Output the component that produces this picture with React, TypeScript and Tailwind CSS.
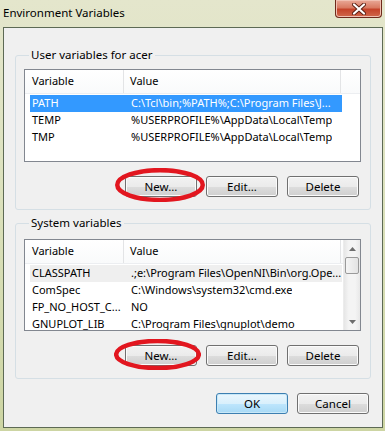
import React from 'react';

const font = { fontFamily: '"Segoe UI", "Noto Sans", "Open Sans", sans-serif' };

type Row = { name: string; value: string; state?: 'active' | 'faint' };

const userVars: Row[] = [
  { name: 'PATH', value: 'C:\\Tcl\\bin;%PATH%;C:\\Program Files\\J...', state: 'active' },
  { name: 'TEMP', value: '%USERPROFILE%\\AppData\\Local\\Temp' },
  { name: 'TMP', value: '%USERPROFILE%\\AppData\\Local\\Temp' },
];

const systemVars: Row[] = [
  { name: 'CLASSPATH', value: '.;e:\\Program Files\\OpenNI\\Bin\\org.Ope...', state: 'faint' },
  { name: 'ComSpec', value: 'C:\\Windows\\system32\\cmd.exe' },
  { name: 'FP_NO_HOST_C...', value: 'NO' },
  { name: 'GNUPLOT_LIB', value: 'C:\\Program Files\\gnuplot\\demo' },
];

const Button = ({ label, primary }: { label: string; primary?: boolean }) => (
  <button
    className={
      'block h-[21px] w-[72px] rounded-[3px] border text-[11.5px] leading-none text-black ' +
      (primary
        ? 'border-[#3c7fb1] bg-[linear-gradient(#eaf6fd_0%,#d9f0fc_50%,#bee6fd_51%,#a7d9f5_100%)] shadow-[inset_0_0_0_1px_#c8e8f8]'
        : 'border-[#707070] bg-[linear-gradient(#f2f2f2_0%,#ebebeb_50%,#dddddd_51%,#cfcfcf_100%)] shadow-[inset_0_0_0_1px_#fbfbfb]')
    }
  >
    {label}
  </button>
);

// the red marker drawn over the "New..." buttons
const Circled = ({ children, ellipse }: { children: React.ReactNode; ellipse: string }) => (
  <div className="relative flex">
    {children}
    <svg className={'pointer-events-none absolute ' + ellipse} viewBox="0 0 100 40" preserveAspectRatio="none">
      <ellipse cx="50" cy="20" rx="47.5" ry="17.5" fill="none" stroke="#e2161f" strokeWidth="4.5" vectorEffect="non-scaling-stroke" />
    </svg>
  </div>
);

const Header = () => (
  <div className="flex h-[24px] items-center border-b border-[#eceef1] bg-[linear-gradient(#ffffff,#f9fafb)] text-[11px] text-black">
    <div className="flex h-full w-[99px] items-center border-r border-[#e3e4e6] pl-[7px]">Variable</div>
    <div className="flex h-full w-[217px] items-center border-r border-[#e3e4e6] pl-[6px]">Value</div>
    <div className="flex-1" />
  </div>
);

const Rows = ({ rows }: { rows: Row[] }) => (
  <div className="pl-[5px] pt-[1px]">
    {rows.map(r => (
      <div
        key={r.name}
        className={
          'flex h-[17px] w-[312px] items-center text-[11px] whitespace-nowrap ' +
          (r.state === 'active' ? 'bg-[#3399ff] text-white' : r.state === 'faint' ? 'bg-[#efefef] text-black' : 'text-black')
        }
      >
        <span className="w-[101px] shrink-0 overflow-hidden pl-[2px]">{r.name}</span>
        <span className="overflow-hidden">{r.value}</span>
      </div>
    ))}
  </div>
);

const Arrow = ({ up }: { up?: boolean }) => (
  <div className="flex h-[17px] items-center justify-center">
    <svg width="7" height="4" viewBox="0 0 7 4">
      <path d={up ? 'M0 4 L3.5 0 L7 4 Z' : 'M0 0 L3.5 4 L7 0 Z'} fill="#6d6d6d" />
    </svg>
  </div>
);

const ScrollBar = () => (
  <div className="flex w-[17px] flex-col border-l border-[#ececec] bg-[linear-gradient(90deg,#e6e6e6,#f4f4f4_30%,#f4f4f4_70%,#e8e8e8)]">
    <Arrow up />
    <div className="mx-[1px] flex h-[17px] items-center justify-center rounded-[2px] border border-[#9a9a9a] bg-[linear-gradient(90deg,#f5f5f5,#e3e3e3)]" />
    <div className="flex-1" />
    <Arrow />
  </div>
);

const Group = ({ title, className, children }: { title: string; className: string; children: React.ReactNode }) => (
  <fieldset className={'ml-[11px] w-[356px] rounded-[3px] border border-[#d5dfe5] pl-[8px] pr-[9px] pb-[12px] ' + className}>
    <legend className="ml-[5px] px-[2px] text-[11.5px] leading-[16px] text-black">{title}</legend>
    {children}
  </fieldset>
);

export default function App() {
  return (
    <div className="flex h-[431px] w-[385px] flex-col bg-[linear-gradient(180deg,#e4e6cc_0%,#dde2bf_40%,#cdd5a3_100%)]" style={font}>
      {/* Title bar */}
      <div className="flex h-[27px] shrink-0 items-start">
        <span className="ml-[3px] mt-[5px] text-[11.5px] leading-[16px] text-black">Environment Variables</span>
        <div className="ml-auto mr-[3px] flex h-[18px] w-[47px] items-center justify-center rounded-b-[4px] border border-t-0 border-[#6e2a1c] bg-[linear-gradient(#e9a998_0%,#d97a62_45%,#c5432a_55%,#d0684c_100%)] shadow-[inset_0_0_0_1px_#f1c0b2]">
          <svg width="14" height="12" viewBox="0 0 14 12">
            <path d="M2 1.5 L12 10.5 M12 1.5 L2 10.5" stroke="#5a1e12" strokeWidth="4" strokeLinecap="round" />
            <path d="M2 1.5 L12 10.5 M12 1.5 L2 10.5" stroke="#ffffff" strokeWidth="2.2" strokeLinecap="round" />
          </svg>
        </div>
      </div>

      {/* Client area */}
      <div className="ml-[3px] flex h-[401px] w-[380px] flex-col border border-[#5d6a55] bg-[#f0f0f0]">
        <Group title="User variables for acer" className="mt-[19px]">
          <div className="mt-[6px] h-[93px] border border-[#828790] bg-white">
            <Header />
            <Rows rows={userVars} />
          </div>
          <div className="mt-[14px] flex justify-end gap-[9px] pr-[2px]">
            <Circled ellipse="-left-[10px] -top-[8px] h-[34px] w-[90px]">
              <Button label="New..." />
            </Circled>
            <Button label="Edit..." />
            <Button label="Delete" />
          </div>
        </Group>

        <Group title="System variables" className="mt-[5px]">
          <div className="mt-[8px] flex h-[92px] border border-[#828790] bg-white">
            <div className="flex-1 overflow-hidden">
              <Header />
              <Rows rows={systemVars} />
            </div>
            <ScrollBar />
          </div>
          <div className="mt-[14px] flex justify-end gap-[9px] pr-[2px]">
            <Circled ellipse="-left-[11px] -top-[6px] h-[31px] w-[87px]">
              <Button label="New..." />
            </Circled>
            <Button label="Edit..." />
            <Button label="Delete" />
          </div>
        </Group>

        <div className="mt-[14px] flex justify-end gap-[9px] pr-[13px]">
          <Button label="OK" primary />
          <Button label="Cancel" />
        </div>
      </div>
    </div>
  );
}
